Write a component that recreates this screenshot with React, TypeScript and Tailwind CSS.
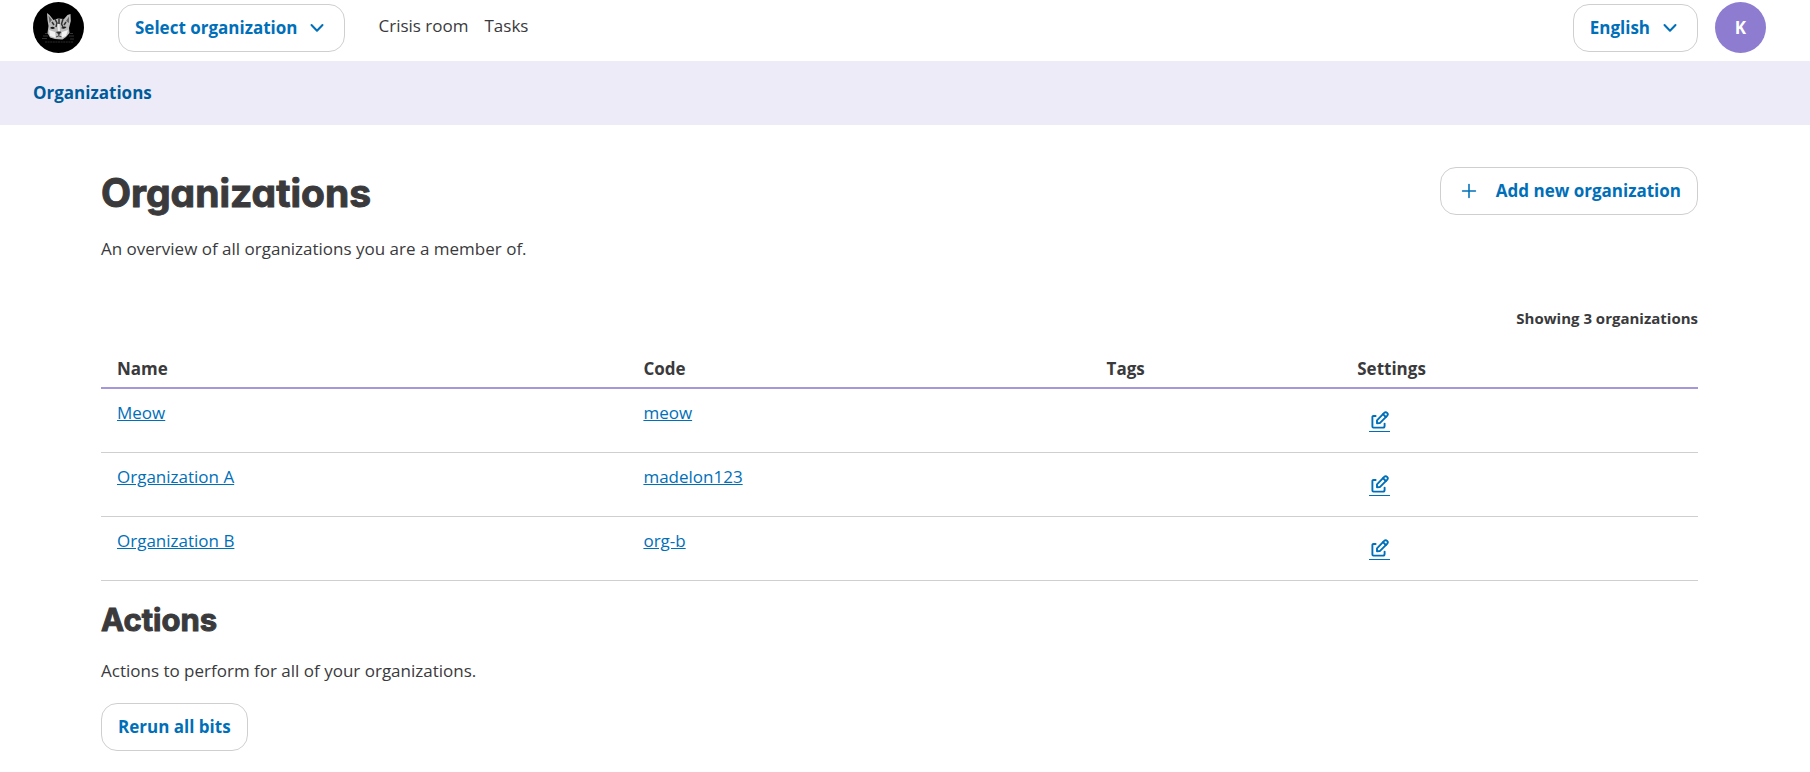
import { Plus } from "lucide-react";

const organizations = [
  { name: "Meow", code: "meow" },
  { name: "Organization A", code: "madelon123" },
  { name: "Organization B", code: "org-b" },
];

const buttonClass =
  "flex h-12 items-center rounded-2xl border border-[#cfcfcf] bg-white px-4 font-bold text-[#006fb9]";

const headingClass =
  "font-['Inter','Lato',sans-serif] font-bold text-[#3a3a3c] [font-feature-settings:'cv11'] [-webkit-text-stroke:1px_#3a3a3c] [stroke-linejoin:round]";

function Chevron() {
  return (
    <svg viewBox="0 0 14 10" className="mr-1 h-[10px] w-[14px]" fill="none" stroke="currentColor" strokeWidth="2" strokeLinecap="round" strokeLinejoin="round" aria-hidden="true">
      <path d="M1.5 2 7 7.8 12.5 2" />
    </svg>
  );
}

function EditIcon() {
  return (
    <svg viewBox="0 0 18 18" className="h-[18px] w-[18px]" fill="none" stroke="currentColor" strokeWidth="1.9" strokeLinecap="round" strokeLinejoin="round" aria-hidden="true">
      <path d="M4.6 5H2.4a1 1 0 0 0-1 1v9.6a1 1 0 0 0 1 1H12a1.6 1.6 0 0 0 1.6-1.6v-2.4" />
      <path d="M6 12.2V9.3l7.2-7.4a2 2 0 0 1 2.9 2.9l-7.3 7.3Z" />
      <path d="m12 3.2 2.8 2.8" />
    </svg>
  );
}

function CatLogo() {
  return (
    <svg viewBox="0 0 51 51" className="h-[51px] w-[51px]" role="img" aria-label="Home">
      <circle cx="25.5" cy="25.5" r="25.5" fill="#000" />
      <path d="M10 34h5M36 34h5M9 36.5h5M37 37h4M12 31.500h3M37 31.500h3" stroke="#333" strokeWidth="1" />
      <path d="M12 40h28" stroke="#2c2c2c" strokeWidth="1.2" strokeDasharray="2 .6" />
      <path d="M14 11 16.500 13 20.500 18 25 16.500 31 17 34.500 13 37.500 12 37.800 19 36 26 36.500 31 33 35 29.500 37.500 22 37 17 35.500 14.500 31 15.500 24 14.500 18Z" fill="#bcbcbc" />
      <path d="M15.500 13.500 19 18 16.500 21ZM36 14.500 33 19 36 21Z" fill="#666" />
      <path d="M22 17 24 21 23 25M26 16.500V22M30 17 28.500 22 30 25M19 20 21 23M33 20 31 23" fill="none" stroke="#333" strokeWidth="1.5" />
      <path d="M17 26q2.500-2.500 5 0-2 2-5 0ZM28 26q3-2.500 5.500-1-2 3-5.500 1Z" fill="#171717" />
      <path d="M24.500 22 26.500 22 27 29 25 29Z" fill="#eee" />
      <path d="M16 28 22 30 23 36 17 34ZM35 28 29 30 28 36 33 34Z" fill="#f2f2f2" />
      <path d="M23.500 30h4.500l-2 2.500ZM25.800 32v2M25.800 34l-3 1M25.800 34l3 1" fill="#222" stroke="#333" strokeWidth=".8" />
    </svg>
  );
}

export default function App() {
  return (
    <div className="bg-white font-['Open_Sans',sans-serif] text-[17px] leading-6 text-[#3a3a3c]">
      <header className="flex h-[61px] items-start pt-[2px] pr-11 pl-[33px]">
        <a href="#" className="mr-[34px]">
          <CatLogo />
        </a>
        <button type="button" className={`${buttonClass} mt-[2px] gap-[13px]`}>
          Select organization
          <Chevron />
        </button>
        <nav className="mt-3 ml-[33px] flex gap-4">
          <a href="#">Crisis room</a>
          <a href="#">Tasks</a>
        </nav>
        <div className="ml-auto flex items-start gap-[17px]">
          <button type="button" className={`${buttonClass} mt-[2px] gap-[13px]`}>
            English
            <Chevron />
          </button>
          <button type="button" className="h-[51px] w-[51px] rounded-full bg-[#8e7cd1] font-bold text-white">
            K
          </button>
        </div>
      </header>

      <nav aria-label="Breadcrumb" className="flex h-16 items-center bg-[#edebf8] px-[33px]">
        <a href="#" className="font-bold text-[#005b98]">
          Organizations
        </a>
      </nav>

      <main className="pt-[42px] pr-28 pb-6 pl-[101px]">
        <div className="flex items-start justify-between">
          <h1 className={`${headingClass} text-[39px] leading-[52px]`}>Organizations</h1>
          <button type="button" className={`${buttonClass} gap-4`}>
            <Plus size={22} strokeWidth={1.7} className="ml-px" aria-hidden="true" />
            Add new organization
          </button>
        </div>
        <p className="mt-[18px]">An overview of all organizations you are a member of.</p>

        <p className="mt-[45px] text-right text-[15px] font-bold">Showing 3 organizations</p>
        <table className="mt-[18px] w-full table-fixed border-collapse text-left">
          <thead>
            <tr className="h-[40px] border-b-2 border-[#a697dc]">
              <th className="w-[32.9%] px-4 pt-[2px]">Name</th>
              <th className="w-[29%] px-[17px] pt-[2px]">Code</th>
              <th className="w-[15.7%] px-[17px] pt-[2px]">Tags</th>
              <th className="px-[17px] pt-[2px]">Settings</th>
            </tr>
          </thead>
          <tbody>
            {organizations.map((org) => (
              <tr key={org.code} className="h-16 border-b border-[#cfcfcf] align-top text-[#006fb9]">
                <td className="px-4 pt-3">
                  <a href="#" className="underline">{org.name}</a>
                </td>
                <td className="px-[17px] pt-3">
                  <a href="#" className="underline">{org.code}</a>
                </td>
                <td />
                <td className="px-[29px] pt-[22px]">
                  <a href="#" aria-label={`Edit ${org.name}`} className="flex h-[21px] w-[21px] justify-center border-b border-current">
                    <EditIcon />
                  </a>
                </td>
              </tr>
            ))}
          </tbody>
        </table>

        <h2 className={`${headingClass} mt-[21px] text-[31px] leading-9`}>Actions</h2>
        <p className="mt-[21px]">Actions to perform for all of your organizations.</p>
        <button type="button" className={`${buttonClass} mt-5`}>
          Rerun all bits
        </button>
      </main>
    </div>
  );
}
